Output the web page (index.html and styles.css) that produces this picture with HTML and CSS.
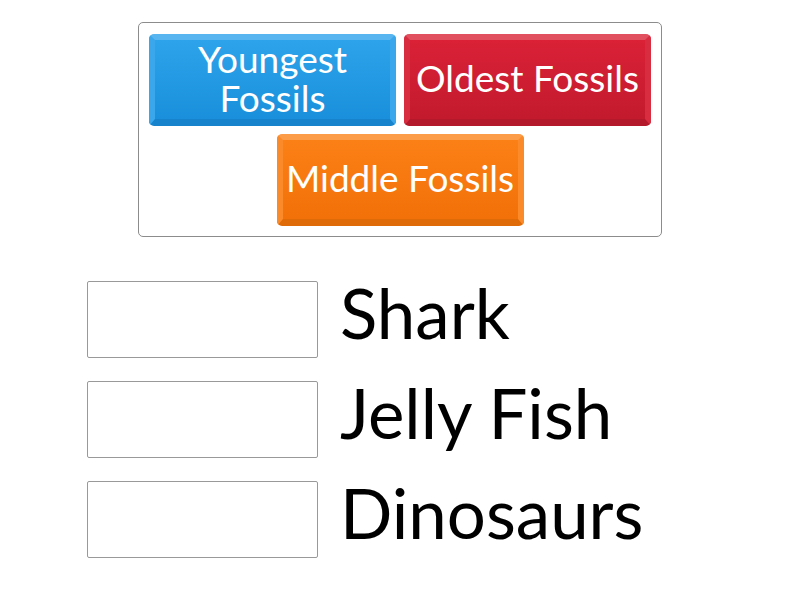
FILE: index.html
```html
<!DOCTYPE html>
<html lang="en">
<head>
    <meta charset="UTF-8">
    <title>Fossil Order</title>
    <link rel="stylesheet" href="styles.css">
</head>
<body>
    <div class="tray">
        <div class="tile tile-blue">Youngest Fossils</div>
        <div class="tile tile-red">Oldest Fossils</div>
        <div class="tile tile-orange">Middle Fossils</div>
    </div>

    <div class="rows">
        <div class="row">
            <div class="slot"></div>
            <span class="label">Shark</span>
        </div>
        <div class="row">
            <div class="slot"></div>
            <span class="label">Jelly Fish</span>
        </div>
        <div class="row">
            <div class="slot"></div>
            <span class="label">Dinosaurs</span>
        </div>
    </div>
</body>
</html>
```

FILE: styles.css
```css
* {
    margin: 0;
    padding: 0;
    box-sizing: border-box;
}

body {
    font-family: Lato, 'Open Sans', sans-serif;
    background: #fff;
    color: #000;
}

.tray {
    width: 524px;
    margin: 22px auto 0;
    padding: 11px 10px 10px;
    border: 1px solid #8c8c8c;
    border-radius: 5px;
    display: flex;
    flex-wrap: wrap;
    justify-content: center;
    gap: 8px;
}

.tile {
    width: 247px;
    height: 92px;
    border: 6px solid;
    border-bottom-width: 7px;
    border-radius: 5px;
    display: flex;
    align-items: center;
    justify-content: center;
    text-align: center;
    color: #fff;
    font-size: 37px;
    line-height: 1.03;
    padding: 0 2px 2px;
}

.tile-blue {
    border-color: #58b5ef #3aa6eb #1683cc;
    background: linear-gradient(#2ca3ea, #1a90dc);
}

.tile-red {
    border-color: #e1505f #d82d40 #b3192b;
    background: linear-gradient(#da2136, #c31a2e);
}

.tile-orange {
    border-color: #fd9c48 #fb8b2a #de6a08;
    background: linear-gradient(#fb8016, #f27108);
}

.rows {
    margin: 44px 0 0 87px;
    display: flex;
    flex-direction: column;
    gap: 23px;
}

.row {
    display: flex;
    align-items: center;
    gap: 22px;
}

.slot {
    width: 231px;
    height: 77px;
    border: 1px solid #999;
    border-radius: 2px;
}

.label {
    font-size: 69px;
    line-height: 0.9;
    padding-bottom: 12px;
}
```
